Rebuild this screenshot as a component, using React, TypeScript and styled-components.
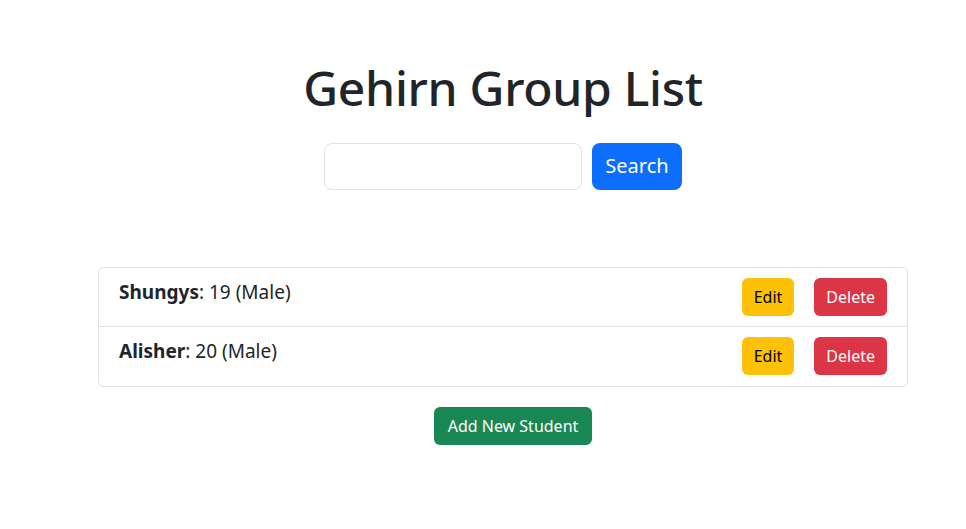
import React, { useState } from "react";
import styled, { createGlobalStyle } from "styled-components";

const Global = createGlobalStyle`
  * { box-sizing: border-box; }
  body {
    margin: 0;
    background: #fff;
    color: #212529;
    font-family: "Noto Sans", "Open Sans", sans-serif;
  }
`;

const Page = styled.div`
  display: flex;
  flex-direction: column;
  align-items: center;
  padding: 59px 58px 0 98px;
`;

const Title = styled.h1`
  margin: 0;
  font-size: 48px;
  font-weight: 500;
  line-height: 1.2;
  color: #212529;
  letter-spacing: -0.3px;
`;

const SearchForm = styled.form`
  display: flex;
  gap: 10px;
  margin-top: 26px;
`;

const SearchInput = styled.input`
  width: 258px;
  height: 47px;
  border: 1px solid #dee2e6;
  border-radius: 8px;
  font: inherit;
  font-size: 20px;
  padding: 0 16px;
  outline: none;
`;

type Variant = "primary" | "warning" | "danger" | "success";

const colors: Record<Variant, { bg: string; fg: string }> = {
  primary: { bg: "#0d6efd", fg: "#fff" },
  warning: { bg: "#ffc107", fg: "#000" },
  danger: { bg: "#dc3545", fg: "#fff" },
  success: { bg: "#198754", fg: "#fff" },
};

const Button = styled.button<{ $variant: Variant; $large?: boolean }>`
  border: none;
  font-family: inherit;
  background: ${(p) => colors[p.$variant].bg};
  color: ${(p) => colors[p.$variant].fg};
  font-size: ${(p) => (p.$large ? "20px" : "16px")};
  height: ${(p) => (p.$large ? "47px" : "38px")};
  padding: ${(p) => (p.$large ? "0 13px" : "0 12px")};
  border-radius: ${(p) => (p.$large ? "8px" : "6px")};
  line-height: 1;
  cursor: pointer;
`;

const List = styled.ul`
  list-style: none;
  margin: 77px 0 0;
  padding: 0;
  width: 810px;
  border: 1px solid #dee2e6;
  border-radius: 6px;
`;

const Item = styled.li`
  display: flex;
  justify-content: space-between;
  align-items: flex-start;
  padding: 10px 20px;
  & + & {
    border-top: 1px solid #dee2e6;
    padding-bottom: 11px;
  }
`;

const Info = styled.span`
  font-size: 19px;
  line-height: 29px;
`;

const Actions = styled.div`
  display: flex;
  gap: 20px;
`;

const AddButton = styled(Button)`
  margin-top: 20px;
  margin-left: 20px;
  padding: 0 14px;
`;

const students = [
  { name: "Shungys", age: 19, gender: "Male" },
  { name: "Alisher", age: 20, gender: "Male" },
];

export default function App() {
  const [q, setQ] = useState("");
  return (
    <>
      <Global />
      <Page>
        <Title>Gehirn Group List</Title>
        <SearchForm onSubmit={(e) => e.preventDefault()}>
          <SearchInput value={q} onChange={(e) => setQ(e.target.value)} />
          <Button $variant="primary" $large type="submit">
            Search
          </Button>
        </SearchForm>
        <List>
          {students.map((s) => (
            <Item key={s.name}>
              <Info>
                <b>{s.name}</b>: {s.age} ({s.gender})
              </Info>
              <Actions>
                <Button $variant="warning">Edit</Button>
                <Button $variant="danger">Delete</Button>
              </Actions>
            </Item>
          ))}
        </List>
        <AddButton $variant="success">Add New Student</AddButton>
      </Page>
    </>
  );
}
